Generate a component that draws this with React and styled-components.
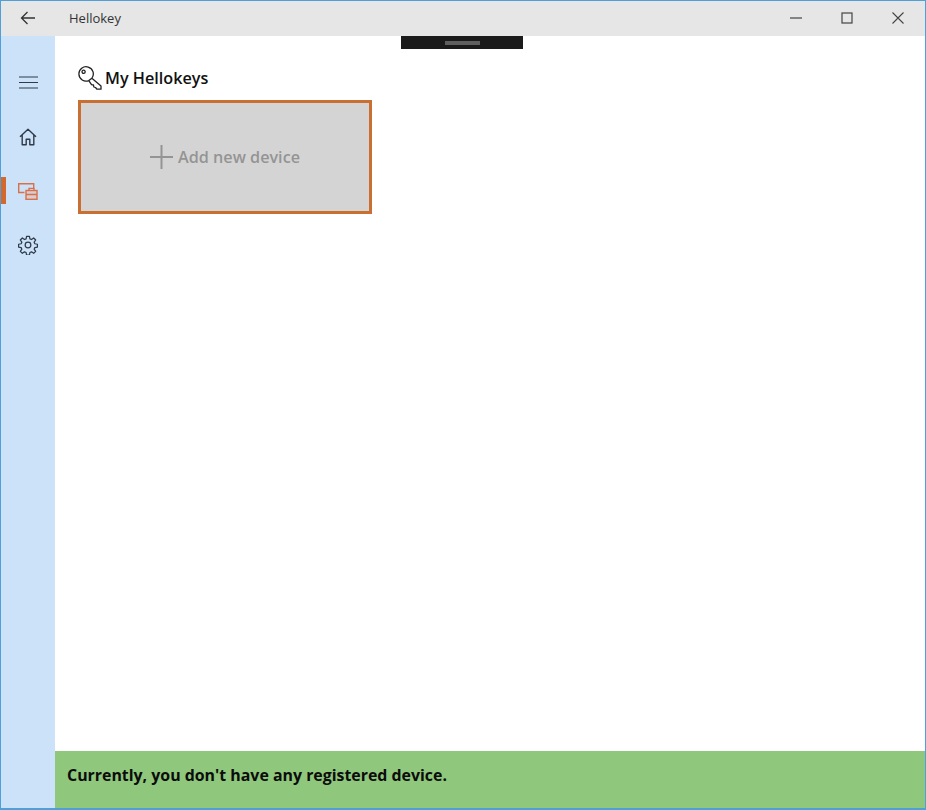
import React from "react";
import styled, { createGlobalStyle } from "styled-components";

const GlobalStyle = createGlobalStyle`
  html, body {
    margin: 0;
    padding: 0;
    background: #fff;
  }
  * {
    box-sizing: border-box;
  }
`;

const App = () => {
  return (
    <>
      <GlobalStyle />
      <Window>
        <TitleBar>
          <BackButton>
            <svg width="16" height="14" viewBox="0 0 16 14" fill="none" stroke="#333" strokeWidth="1.3">
              <path d="M15 7H1.5M7.5 1L1.5 7l6 6" />
            </svg>
          </BackButton>
          <AppName>Hellokey</AppName>
          <WindowControls>
            <ControlButton>
              <svg width="12" height="12" viewBox="0 0 12 12" fill="none" stroke="#444" strokeWidth="1.2">
                <path d="M0 6h12" />
              </svg>
            </ControlButton>
            <ControlButton>
              <svg width="12" height="12" viewBox="0 0 12 12" fill="none" stroke="#444" strokeWidth="1.2">
                <rect x="1" y="1" width="10" height="10" />
              </svg>
            </ControlButton>
            <ControlButton>
              <svg width="12" height="12" viewBox="0 0 12 12" fill="none" stroke="#444" strokeWidth="1.1">
                <path d="M0.5 0.5l11 11M11.5 0.5l-11 11" />
              </svg>
            </ControlButton>
          </WindowControls>
        </TitleBar>
        <DragHandle>
          <HandleGrip />
        </DragHandle>
        <Body>
          <Sidebar>
            <MenuItem>
              <svg width="19" height="13" viewBox="0 0 19 13" fill="none" stroke="#2f3b4a" strokeWidth="1.1">
                <path d="M0 1h19M0 6.5h19M0 12h19" />
              </svg>
            </MenuItem>
            <NavItem>
              <svg width="18" height="18" viewBox="0 0 18 18" fill="none" stroke="#2f3b4a" strokeWidth="1.4" strokeLinejoin="round">
                <path d="M1 8.8L9 1.2l8 7.6M3.2 7v9.8h4v-5.6h3.6v5.6h4V7" />
              </svg>
            </NavItem>
            <NavItem $active>
              <svg width="20" height="17" viewBox="0 0 20 17" fill="none" stroke="#d9704a" strokeWidth="1.4">
                <path d="M6.5 9.5H0.7V0.7h15v4.5" />
                <rect x="8" y="7.5" width="11" height="8.8" fill="#e9a98c" fillOpacity="0.35" />
                <path d="M11 7.5V5.4h5v2.1M8 11.5h11" />
              </svg>
            </NavItem>
            <NavItem>
              <svg width="20" height="20" viewBox="0 0 24 24" fill="none" stroke="#2f3b4a" strokeWidth="1.5" strokeLinejoin="round">
                <circle cx="12" cy="12" r="3.4" />
                <path d="M10.3 1.5h3.4l.6 3.1 1.9.8 2.6-1.8 2.4 2.4-1.8 2.6.8 1.9 3.1.6v3.4l-3.1.6-.8 1.9 1.8 2.6-2.4 2.4-2.6-1.8-1.9.8-.6 3.1h-3.4l-.6-3.1-1.9-.8-2.6 1.8-2.4-2.4 1.8-2.6-.8-1.9-3.1-.6v-3.4l3.1-.6.8-1.9-1.8-2.6 2.4-2.4 2.6 1.8 1.9-.8z" />
              </svg>
            </NavItem>
          </Sidebar>
          <Main>
            <Content>
              <Heading>
                <svg width="24" height="24" viewBox="0 0 24 24" fill="none" stroke="#222" strokeWidth="1.3" strokeLinejoin="round">
                  <path d="M10.8 14.6L13.5 18.6l2 .4.3 2 1.7.5 1.5 1.7h4V20l-9.1-7.8zM10.8 14.6A7.2 7.2 0 1 1 13.9 12.2" />
                  <circle cx="5.6" cy="5.8" r="1.6" />
                </svg>
                <HeadingText>My Hellokeys</HeadingText>
              </Heading>
              <AddCard>
                <svg width="23" height="24" viewBox="0 0 23 24" fill="none" stroke="#949494" strokeWidth="2">
                  <path d="M0 12h23M11.5 0v24" />
                </svg>
                <AddLabel>Add new device</AddLabel>
              </AddCard>
            </Content>
            <StatusBar>Currently, you don't have any registered device.</StatusBar>
          </Main>
        </Body>
      </Window>
    </>
  );
};

export default App;

const Window = styled.div`
  position: relative;
  width: 926px;
  height: 810px;
  display: flex;
  flex-direction: column;
  border: 1px solid #4fa0d8;
  border-bottom-width: 2px;
  font-family: "Open Sans", "Noto Sans", sans-serif;
  background: #fff;
  overflow: hidden;
`;

const TitleBar = styled.div`
  height: 35px;
  flex: none;
  display: flex;
  align-items: center;
  padding-bottom: 2px;
  background: #e6e6e6;
`;

const BackButton = styled.div`
  width: 54px;
  display: flex;
  justify-content: center;
`;

const AppName = styled.div`
  margin-left: 14px;
  font-size: 13px;
  color: #333;
`;

const WindowControls = styled.div`
  margin-left: auto;
  margin-right: 2px;
  display: flex;
`;

const ControlButton = styled.div`
  width: 51px;
  height: 33px;
  display: flex;
  align-items: center;
  justify-content: center;
`;

const DragHandle = styled.div`
  position: absolute;
  top: 35px;
  left: 400px;
  width: 122px;
  height: 13px;
  background: #1b1b1b;
  display: flex;
  justify-content: center;
  padding-top: 5px;
`;

const HandleGrip = styled.div`
  width: 35px;
  height: 4px;
  background: #5f5f5f;
`;

const Body = styled.div`
  flex: 1;
  display: flex;
  min-height: 0;
`;

const Sidebar = styled.div`
  width: 54px;
  flex: none;
  background: #cce2f8;
  padding-top: 19px;
  display: flex;
  flex-direction: column;
`;

const NavItem = styled.div`
  position: relative;
  height: 54px;
  display: flex;
  align-items: center;
  justify-content: center;

  ${(props) =>
    props.$active &&
    `
    &::before {
      content: "";
      position: absolute;
      left: 0;
      top: 13px;
      width: 5px;
      height: 27px;
      background: #d4692e;
    }
  `}
`;

const MenuItem = styled(NavItem)`
  height: 55px;
`;

const Main = styled.div`
  flex: 1;
  display: flex;
  flex-direction: column;
`;

const Content = styled.div`
  flex: 1;
  padding: 29px 0 0 23px;
`;

const Heading = styled.div`
  height: 26px;
  display: flex;
  align-items: center;
  gap: 3px;
`;

const HeadingText = styled.div`
  font-size: 16.2px;
  font-weight: 600;
  color: #111;
`;

const AddCard = styled.div`
  width: 294px;
  height: 114px;
  margin-top: 9px;
  border: 3px solid #c96f32;
  background: #d4d4d4;
  display: flex;
  align-items: center;
  justify-content: center;
  gap: 5px;
`;

const AddLabel = styled.div`
  font-size: 16.2px;
  font-weight: 600;
  color: #949494;
`;

const StatusBar = styled.div`
  height: 57px;
  flex: none;
  display: flex;
  align-items: center;
  padding: 0 0 10px 12px;
  background: #8fc87c;
  font-size: 15.9px;
  font-weight: 700;
  color: #0c0c0c;
`;
